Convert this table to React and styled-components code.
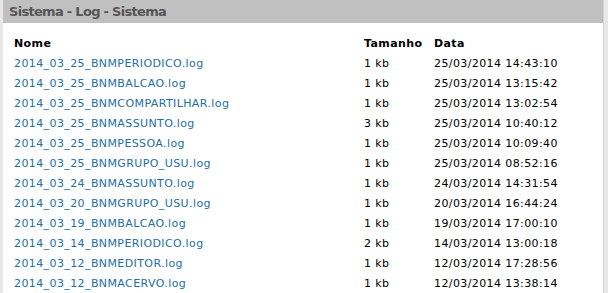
import React from 'react';
import styled, { createGlobalStyle } from 'styled-components';

const GlobalStyle = createGlobalStyle`
  html, body {
    margin: 0;
    padding: 0;
    background: #e8e8e8;
  }
`;

const Page = styled.div`
  width: 608px;
  height: 293px;
  padding: 0 4px 0 3px;
  box-sizing: border-box;
  overflow: hidden;
  font-family: "DejaVu Sans", Verdana, sans-serif;
`;

const Panel = styled.div`
  background: #fff;
  border-right: 1px solid #d4d4d4;
  height: 100%;
`;

const Header = styled.div`
  height: 23px;
  background: #c0c0c0;
  color: #555;
  font-weight: bold;
  font-size: 13px;
  letter-spacing: -0.7px;
  line-height: 24px;
  padding-left: 6px;
`;

const Table = styled.table`
  border-collapse: collapse;
  margin: 10px 0 0 11px;
  font-size: 11px;
  letter-spacing: 0.4px;
`;

const Th = styled.th`
  text-align: left;
  font-weight: bold;
  color: #000;
  height: 20px;
  padding: 0;
  width: ${(p) => p.$w || 'auto'};
`;

const Td = styled.td`
  height: 20px;
  padding: 0;
  color: #000;
`;

const FileLink = styled.a`
  color: #1e6fa3;
  text-decoration: none;
`;

const logs = [
  ['2014_03_25_BNMPERIODICO.log', '1 kb', '25/03/2014 14:43:10'],
  ['2014_03_25_BNMBALCAO.log', '1 kb', '25/03/2014 13:15:42'],
  ['2014_03_25_BNMCOMPARTILHAR.log', '1 kb', '25/03/2014 13:02:54'],
  ['2014_03_25_BNMASSUNTO.log', '3 kb', '25/03/2014 10:40:12'],
  ['2014_03_25_BNMPESSOA.log', '1 kb', '25/03/2014 10:09:40'],
  ['2014_03_25_BNMGRUPO_USU.log', '1 kb', '25/03/2014 08:52:16'],
  ['2014_03_24_BNMASSUNTO.log', '1 kb', '24/03/2014 14:31:54'],
  ['2014_03_20_BNMGRUPO_USU.log', '1 kb', '20/03/2014 16:44:24'],
  ['2014_03_19_BNMBALCAO.log', '1 kb', '19/03/2014 17:00:10'],
  ['2014_03_14_BNMPERIODICO.log', '2 kb', '14/03/2014 13:00:18'],
  ['2014_03_12_BNMEDITOR.log', '1 kb', '12/03/2014 17:28:56'],
  ['2014_03_12_BNMACERVO.log', '1 kb', '12/03/2014 13:38:14'],
];

export default function App() {
  return (
    <Page>
      <GlobalStyle />
      <Panel>
        <Header>Sistema - Log - Sistema</Header>
        <Table>
          <thead>
            <tr>
              <Th $w="350px">Nome</Th>
              <Th $w="70px">Tamanho</Th>
              <Th>Data</Th>
            </tr>
          </thead>
          <tbody>
            {logs.map(([name, size, date]) => (
              <tr key={name}>
                <Td><FileLink href="#">{name}</FileLink></Td>
                <Td>{size}</Td>
                <Td>{date}</Td>
              </tr>
            ))}
          </tbody>
        </Table>
      </Panel>
    </Page>
  );
}
